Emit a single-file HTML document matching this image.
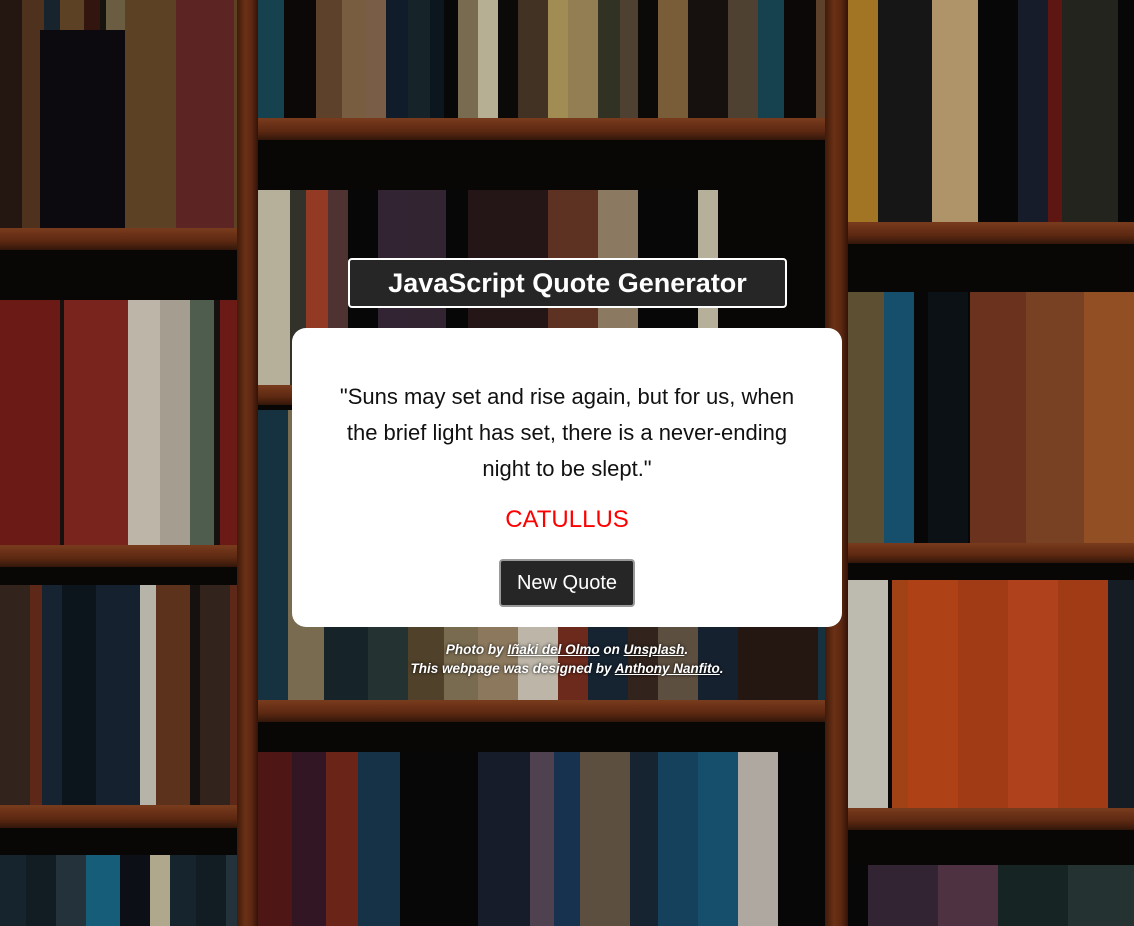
<!DOCTYPE html>
<html><head><meta charset="utf-8"><style>
html,body{margin:0;padding:0;width:1134px;height:926px;overflow:hidden;background:#0b0806;font-family:"Liberation Sans",sans-serif}
.a{position:absolute}
.board{position:absolute;background:linear-gradient(#8a4422,#6a2e14 60%,#3a1a0c)}
.post{position:absolute;top:0;height:926px;background:linear-gradient(90deg,#4a1e0c,#7a3818 40%,#6a2e14 70%,#3a160a)}
.b1{background:repeating-linear-gradient(90deg,#2a1a14 0 22px,#5a3a22 22px 44px,#1c2a34 44px 60px,#6a4a2a 60px 84px,#3a1810 84px 100px,#1a1612 100px 106px,#7a6a4a 106px 126px,#14202a 126px 146px,#4a2a1c 146px 170px)}
.b2{background:repeating-linear-gradient(90deg,#7a1e18 0 60px,#1a1410 60px 64px,#8a2a20 64px 128px,#d8d0c0 128px 160px,#bcb4a4 160px 190px,#5a6a5a 190px 214px,#1a1410 214px 220px)}
.b3{background:repeating-linear-gradient(90deg,#3a2a20 0 30px,#6a2e1c 30px 42px,#1a2a38 42px 62px,#0e1820 62px 96px,#1a2636 96px 140px,#d0ccc0 140px 156px,#6a3a22 156px 190px,#1a1410 190px 200px)}
.b4{background:repeating-linear-gradient(90deg,#1a2a34 0 26px,#142028 26px 56px,#2a3a44 56px 86px,#1a6a8a 86px 120px,#0e1218 120px 150px,#c8c0a0 150px 170px)}
.m1{background:repeating-linear-gradient(90deg,#1a4a5a 0 26px,#0e0a08 26px 58px,#6a4a30 58px 84px,#8a6a4a 84px 108px,#8a6a50 108px 128px,#142030 128px 150px,#1a2a30 150px 172px,#0e1a24 172px 186px,#0a0a0a 186px 200px,#8a7a5a 200px 220px,#d0c8a8 220px 240px,#0e0c0a 240px 260px,#4a3a28 260px 290px,#b8a060 290px 310px,#a89060 310px 340px,#3a3a2a 340px 362px,#5a4a3a 362px 380px,#0e0c0a 380px 400px,#8a6a40 400px 430px,#1a1410 430px 470px,#5a4a3a 470px 500px)}
.m2{background:repeating-linear-gradient(90deg,#d0c8b0 0 32px,#3a3a30 32px 48px,#a8422a 48px 70px,#5a3a3a 70px 90px,#0a0808 90px 120px,#3a2a3a 120px 150px,#3a2a38 150px 188px,#0a0808 188px 210px,#2a1a1a 210px 290px,#6a3a28 290px 340px,#a08a70 340px 380px,#0a0808 380px 440px)}
.m3{background:repeating-linear-gradient(90deg,#1a3a4a 0 30px,#8a7a5a 30px 66px,#1a2a30 66px 110px,#2a3a3a 110px 150px,#5a4a30 150px 186px,#8a7a5a 186px 220px,#a08a6a 220px 260px,#d8d0c0 260px 300px,#7a3020 300px 330px,#1a2a3a 330px 370px,#3a2a20 370px 400px,#6a5a48 400px 440px,#1a2636 440px 480px,#2a1a14 480px 560px)}
.m4{background:repeating-linear-gradient(90deg,#5a1a1a 0 34px,#3a1a2a 34px 68px,#7a2a1c 68px 100px,#1a3a50 100px 142px,#0a0808 142px 220px,#1a2030 220px 272px,#5a4a5a 272px 296px,#1a3a5a 296px 322px,#6a5a48 322px 372px,#1a2a3a 372px 400px,#1a4a6a 400px 440px,#1a5a7a 440px 480px,#c8c0b8 480px 520px,#0a0808 520px 567px)}
.r1{background:repeating-linear-gradient(90deg,#b8862a 0 30px,#1a1a1a 30px 84px,#c8a878 84px 130px,#0a0808 130px 170px,#1a2030 170px 200px,#6a1a14 200px 214px,#2a2a24 214px 270px,#0a0808 270px 286px)}
.r2{background:repeating-linear-gradient(90deg,#6a5a3a 0 36px,#1a5a7a 36px 66px,#0a0808 66px 80px,#0e1418 80px 120px,#0a0808 120px 122px,#7a3a22 122px 178px,#8a4a2a 178px 236px,#a85a2a 236px 286px)}
.r3{background:repeating-linear-gradient(90deg,#d8d4c8 0 40px,#0a0808 40px 44px,#b84a1a 44px 60px,#c84a1a 60px 110px,#b8441a 110px 160px,#c84c20 160px 210px,#b84418 210px 260px,#1a2028 260px 286px)}
.r4{background:repeating-linear-gradient(90deg,#0a0808 0 20px,#3a2a3a 20px 90px,#5a3a4a 90px 150px,#1a2a2a 150px 220px,#2a3a3a 220px 286px)}
</style></head><body>
<div class="a b1" style="left:0;top:0;width:237px;height:228px"></div>
<div class="a" style="left:40px;top:30px;width:90px;height:198px;background:#0e0c10"></div>
<div class="a" style="left:125px;top:0;width:62px;height:228px;background:#6a4a2a"></div>
<div class="a" style="left:176px;top:0;width:58px;height:228px;background:#6a2a2a"></div>
<div class="board" style="left:0;top:228px;width:237px;height:22px"></div>
<div class="a b2" style="left:0;top:300px;width:237px;height:245px"></div>
<div class="board" style="left:0;top:545px;width:237px;height:22px"></div>
<div class="a b3" style="left:0;top:585px;width:237px;height:220px"></div>
<div class="board" style="left:0;top:805px;width:237px;height:23px"></div>
<div class="a b4" style="left:0;top:855px;width:237px;height:71px"></div>
<div class="a m1" style="left:258px;top:0;width:567px;height:118px"></div>
<div class="board" style="left:258px;top:118px;width:567px;height:22px"></div>
<div class="a m2" style="left:258px;top:190px;width:460px;height:195px"></div>
<div class="board" style="left:258px;top:385px;width:567px;height:20px"></div>
<div class="a m3" style="left:258px;top:410px;width:567px;height:290px"></div>
<div class="board" style="left:258px;top:700px;width:567px;height:22px"></div>
<div class="a m4" style="left:258px;top:752px;width:567px;height:174px"></div>
<div class="a r1" style="left:848px;top:0;width:286px;height:222px"></div>
<div class="board" style="left:848px;top:222px;width:286px;height:22px"></div>
<div class="a r2" style="left:848px;top:292px;width:286px;height:251px"></div>
<div class="board" style="left:848px;top:543px;width:286px;height:20px"></div>
<div class="a r3" style="left:848px;top:580px;width:286px;height:228px"></div>
<div class="board" style="left:848px;top:808px;width:286px;height:22px"></div>
<div class="a r4" style="left:848px;top:865px;width:286px;height:61px"></div>
<div class="post" style="left:237px;width:21px"></div>
<div class="post" style="left:825px;width:23px"></div>
<div class="a" style="left:0;top:0;width:1134px;height:926px;background:rgba(0,0,0,0.12)"></div>

<div class="a" style="left:348px;top:258px;width:435px;height:46px;background:#262626;border:2px solid #fff;border-radius:4px;color:#fff;font-weight:bold;font-size:27px;text-align:center;line-height:46px">JavaScript Quote Generator</div>
<div class="a" style="left:292px;top:328px;width:550px;height:299px;background:#fff;border-radius:14px;text-align:center">
  <div style="position:absolute;left:30px;right:30px;top:51px;font-size:22px;line-height:36px;color:#111">"Suns may set and rise again, but for us, when the brief light has set, there is a never-ending night to be slept."</div>
  <div style="position:absolute;left:0;right:0;top:178px;font-size:24px;color:#ff0000">CATULLUS</div>
  <div style="position:absolute;left:207px;top:231px;width:132px;height:44px;background:#262626;border:2px solid #999;border-radius:4px;color:#fff;font-size:20px;line-height:44px">New Quote</div>
</div>
<div class="a" style="left:292px;width:550px;top:640px;text-align:center;color:#fff;font-style:italic;font-weight:bold;font-size:13.5px;line-height:19px;text-shadow:0 0 3px #000">
Photo by <u>Iñaki del Olmo</u> on <u>Unsplash</u>.<br>This webpage was designed by <u>Anthony Nanfito</u>.
</div>
</body></html>
